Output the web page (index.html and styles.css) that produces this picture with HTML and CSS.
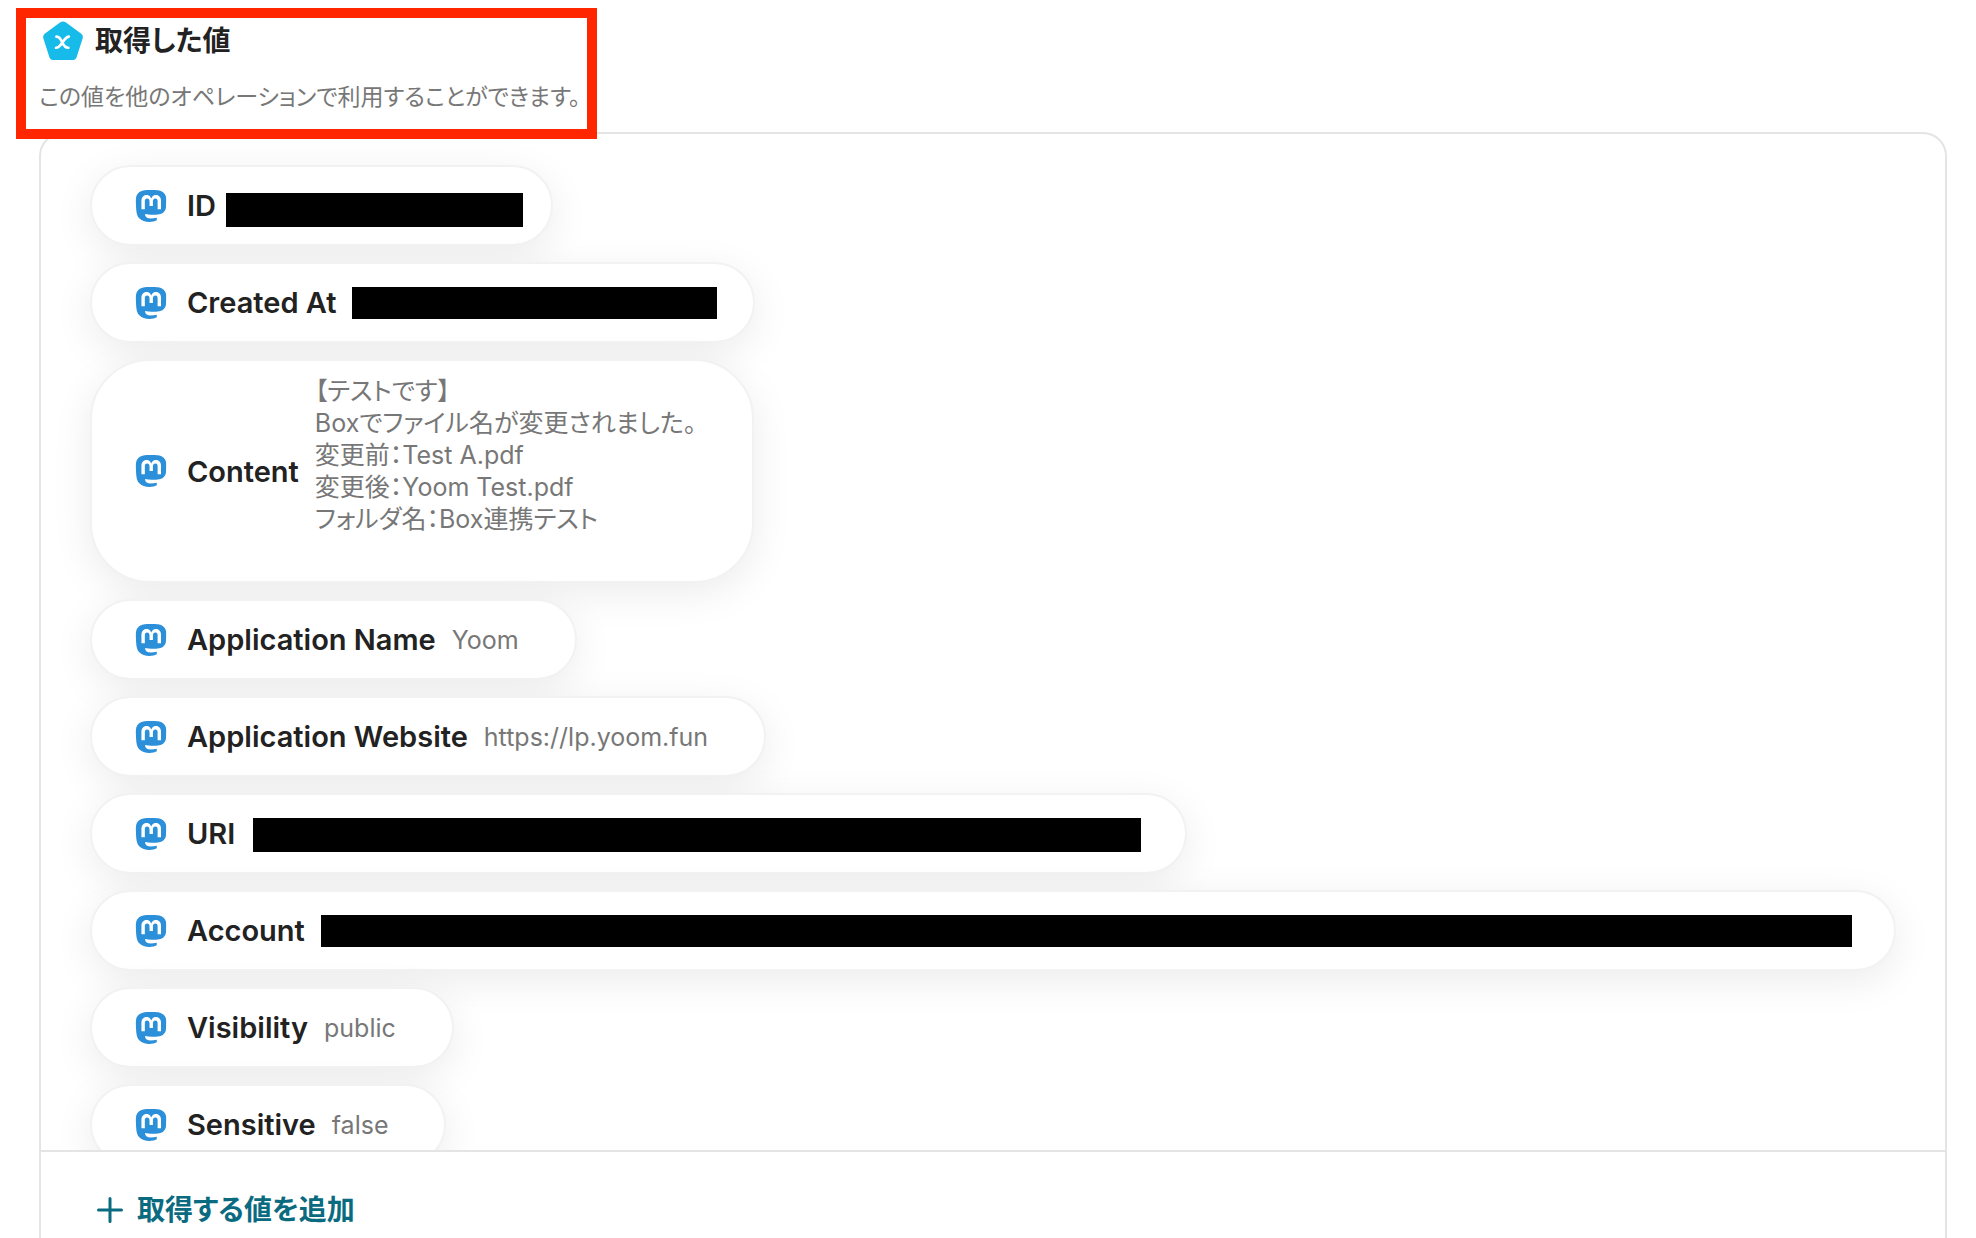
FILE: index.html
```html
<!DOCTYPE html>
<html lang="ja">
<head>
	<title>取得した値</title>
	<meta charset="utf-8">
	<meta name="viewport" content="width=device-width, initial-scale=1">
	<link rel="stylesheet" href="styles.css">
</head>
<body>
	<svg class="sprite" aria-hidden="true">
		<symbol id="mastodon" viewBox="0 0 24 24">
			<path fill="#2b90d9" d="M23.268 5.313c-.35-2.578-2.617-4.61-5.304-5.004C17.51.242 15.792 0 11.813 0h-.03c-3.98 0-4.835.242-5.288.309C3.882.692 1.496 2.518.917 5.127.64 6.412.61 7.837.661 9.143c.074 1.874.088 3.745.26 5.611.118 1.24.325 2.47.62 3.68.55 2.237 2.777 4.098 4.96 4.857 2.336.792 4.849.923 7.256.38.265-.061.527-.132.786-.213.585-.184 1.27-.39 1.774-.753a.057.057 0 0 0 .023-.043v-1.809a.052.052 0 0 0-.02-.041.053.053 0 0 0-.046-.01 20.282 20.282 0 0 1-4.709.545c-2.73 0-3.463-1.284-3.674-1.818a5.593 5.593 0 0 1-.319-1.433.053.053 0 0 1 .066-.054c1.517.363 3.072.546 4.632.546.376 0 .75 0 1.125-.01 1.57-.044 3.224-.124 4.768-.422.038-.008.077-.015.11-.024 2.435-.464 4.753-1.92 4.989-5.604.008-.145.03-1.52.03-1.67.002-.512.167-3.63-.024-5.545zm-3.748 9.195h-2.561V8.29c0-1.309-.55-1.976-1.67-1.976-1.23 0-1.846.79-1.846 2.35v3.403h-2.546V8.663c0-1.56-.617-2.35-1.848-2.35-1.112 0-1.668.668-1.67 1.977v6.218H4.822V8.102c0-1.31.337-2.35 1.011-3.12.696-.77 1.608-1.164 2.74-1.164 1.311 0 2.302.5 2.962 1.498l.638 1.06.638-1.06c.66-.999 1.65-1.498 2.96-1.498 1.13 0 2.043.395 2.74 1.164.675.77 1.012 1.81 1.012 3.12z"/>
		</symbol>
	</svg>

	<header class="header">
		<h1 class="title">
			<svg class="titleIcon" viewBox="0 0 40 40" aria-hidden="true">
				<path fill="#17bbea" d="M17 1.6Q20 -.6 23 1.6L38 12.6Q40.600 14.600 39.600 17.600L33.600 36.200Q32.600 39 29.600 39H10.400Q7.400 39 6.400 36.200L.4 17.600Q-.6 14.600 2 12.600Z"/>
				<path fill="none" stroke="#fff" stroke-width="2.600" stroke-linecap="round" d="M13.400 15.600C19.800 15 18.200 27 25.400 26.800M25.800 15.600C20 16.400 19 26.400 13 26.800"/>
			</svg>
			取得した値
		</h1>
		<p class="lead">この値を他のオペレーションで利用することができます。</p>
	</header>

	<main class="panel">
		<ul class="list">
			<li class="item">
				<svg class="icon"><use href="#mastodon"/></svg>
				<span class="name">ID</span>
				<span class="value hidden" style="width: 263px"><i class="mask maskId"></i></span>
			</li>
			<li class="item">
				<svg class="icon"><use href="#mastodon"/></svg>
				<span class="name">Created At</span>
				<span class="value hidden" style="width: 345px"><i class="mask maskCreated"></i></span>
			</li>
			<li class="item">
				<svg class="icon"><use href="#mastodon"/></svg>
				<span class="name">Content</span>
				<span class="value">【テストです】<br>Boxでファイル名が変更されました。<br>変更前：Test A.pdf<br>変更後：Yoom Test.pdf<br>フォルダ名：Box連携テスト<br><br></span>
			</li>
			<li class="item">
				<svg class="icon"><use href="#mastodon"/></svg>
				<span class="name">Application Name</span>
				<span class="value">Yoom</span>
			</li>
			<li class="item">
				<svg class="icon"><use href="#mastodon"/></svg>
				<span class="name">Application Website</span>
				<span class="value">https://lp.yoom.fun</span>
			</li>
			<li class="item">
				<svg class="icon"><use href="#mastodon"/></svg>
				<span class="name">URI</span>
				<span class="value hidden" style="width: 878px"><i class="mask maskUri"></i></span>
			</li>
			<li class="item">
				<svg class="icon"><use href="#mastodon"/></svg>
				<span class="name">Account</span>
				<span class="value hidden" style="width: 1517px"><i class="mask maskAccount"></i></span>
			</li>
			<li class="item">
				<svg class="icon"><use href="#mastodon"/></svg>
				<span class="name">Visibility</span>
				<span class="value">public</span>
			</li>
			<li class="item">
				<svg class="icon"><use href="#mastodon"/></svg>
				<span class="name">Sensitive</span>
				<span class="value">false</span>
			</li>
		</ul>
		<div class="footer">
			<button class="add" type="button">
				<svg class="plus" viewBox="0 0 26 26" aria-hidden="true">
					<path stroke="currentColor" stroke-width="3" stroke-linecap="round" d="M13 1.500V24.500M1.500 13H24.500"/>
				</svg>
				取得する値を追加
			</button>
		</div>
	</main>
</body>
</html>
```
FILE: styles.css
```css
*,
*::after {
	box-sizing: border-box;
}

body {
	display: flex;
	flex-direction: column;
	height: 100vh;
	margin: 0;
	padding: 17px 29px 0 39px;
	overflow: hidden;
	background: #fff;
	color: #222;
	font-family: Inter, "Noto Sans CJK JP", sans-serif;
	font-feature-settings: "palt";
}

.sprite {
	position: absolute;
	width: 0;
	height: 0;
}

.header {
	position: relative;
	height: 115px;
}

/* red highlight drawn over the heading and the panel edge */
.header::after {
	content: "";
	position: absolute;
	top: -9px;
	left: -23px;
	width: 581px;
	height: 131px;
	border: 10px solid #ff2600;
}

.title {
	display: flex;
	align-items: center;
	gap: 12px;
	margin: 0;
	padding: 4px;
	font-size: 28px;
	font-weight: 600;
	line-height: 40px;
}

.titleIcon {
	width: 40px;
	height: 40px;
}

.lead {
	margin: 16px 0 0;
	color: #777;
	font-size: 23px;
	line-height: 32px;
}

.panel {
	display: flex;
	flex: 1;
	flex-direction: column;
	min-height: 0;
	border: 2px solid #e4e4e4;
	border-bottom: 0;
	border-radius: 24px 24px 0 0;
}

.list {
	display: flex;
	flex: 1;
	flex-direction: column;
	align-items: flex-start;
	gap: 16px;
	min-height: 0;
	margin: 0;
	padding: 31px 49px 0;
	overflow: hidden;
	list-style: none;
}

.item {
	display: flex;
	flex-shrink: 0;
	align-items: center;
	min-height: 81px;
	padding: 14px 56px 14px 43px;
	border: 2px solid #f2f2f2;
	border-radius: 60px;
	background: #fff;
	box-shadow: 0 10px 40px rgba(0, 0, 0, 0.08);
	white-space: nowrap;
}

.icon {
	width: 32px;
	height: 32px;
	margin-right: 20px;
}

.name {
	margin-right: 16px;
	font-size: 29px;
	font-weight: 600;
}

.value {
	color: #777;
	font-size: 25px;
	line-height: 32px;
}

.hidden {
	position: relative;
	height: 32px;
}

.mask {
	position: absolute;
	top: 0;
	bottom: 0;
	background: #000;
}

.maskId {
	top: 3px;
	bottom: -5px;
	left: -6px;
	right: -28px;
}

.maskCreated {
	left: 0;
	right: -20px;
}

.maskUri {
	bottom: -2px;
	left: 2px;
	right: -12px;
}

.maskAccount {
	left: 0;
	right: -14px;
}

.footer {
	flex-shrink: 0;
	height: 88px;
	padding: 36px 56px 0;
	border-top: 2px solid #e4e4e4;
}

.add {
	display: flex;
	align-items: center;
	gap: 14px;
	padding: 0;
	border: 0;
	background: none;
	color: #0a6b80;
	font: inherit;
	font-size: 28px;
	font-weight: 600;
	line-height: 44px;
	cursor: pointer;
}

.plus {
	width: 26px;
	height: 26px;
}
```
